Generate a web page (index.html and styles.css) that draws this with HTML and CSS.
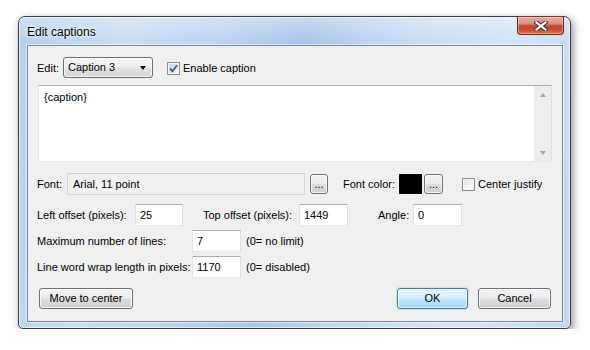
FILE: index.html
```html
<!DOCTYPE html>
<html>
<head>
<meta charset="utf-8">
<link rel="stylesheet" href="styles.css">
</head>
<body>
<div class="window">
  <div class="titlebar">
    <span class="title">Edit captions</span>
    <div class="close">
      <svg width="14" height="10" viewBox="0 0 14 10">
        <path d="M2.5 1.5 L11.5 8.5 M11.5 1.5 L2.5 8.5" stroke="#3a3a3a" stroke-width="4.2" stroke-linecap="square" fill="none"/>
        <path d="M2.5 1.5 L11.5 8.5 M11.5 1.5 L2.5 8.5" stroke="#ffffff" stroke-width="2.2" stroke-linecap="square" fill="none"/>
      </svg>
    </div>
  </div>
  <div class="client">
    <div class="row row-edit">
      <span class="lbl w-edit">Edit:</span>
      <div class="combo"><span>Caption 3</span><span class="arrow"></span></div>
      <span class="check checked"><span class="box"><svg width="11" height="11" viewBox="0 0 11 11"><path d="M2 5.5 L4.5 8.2 L9 2.2" stroke="#3c5b9c" stroke-width="1.9" fill="none"/></svg></span>Enable caption</span>
    </div>
    <div class="memo">
      <div class="memo-text">{caption}</div>
      <div class="vscroll"><span class="up"></span><span class="down"></span></div>
    </div>
    <div class="row row-font">
      <span class="lbl w-font">Font:</span>
      <div class="field ro">Arial, 11 point</div>
      <div class="btn dots dots1">...</div>
      <span class="lbl w-fcolor">Font color:</span>
      <div class="swatch"></div>
      <div class="btn dots dots2">...</div>
      <span class="check cj"><span class="box"></span>Center justify</span>
    </div>
    <div class="row row-off">
      <span class="lbl w-left">Left offset (pixels):</span>
      <div class="field num w48">25</div>
      <span class="lbl w-top">Top offset (pixels):</span>
      <div class="field num w49">1449</div>
      <span class="lbl w-angle">Angle:</span>
      <div class="field num w49">0</div>
    </div>
    <div class="row row-lines">
      <span class="lbl w-long">Maximum number of lines:</span>
      <div class="field num w49">7</div>
      <span class="note">(0= no limit)</span>
    </div>
    <div class="row row-wrap">
      <span class="lbl w-long">Line word wrap length in pixels:</span>
      <div class="field num w49">1170</div>
      <span class="note">(0= disabled)</span>
    </div>
    <div class="row row-buttons">
      <div class="btn move">Move to center</div>
      <div class="spacer"></div>
      <div class="btn ok">OK</div>
      <div class="btn cancel">Cancel</div>
    </div>
  </div>
</div>
</body>
</html>
```

FILE: styles.css
```css
html, body {
  margin: 0;
  background: #ffffff;
}
body {
  font-family: "Liberation Sans", Arial, sans-serif;
  font-size: 11px;
  color: #000;
}
.window {
  margin: 16px 0 0 18px;
  width: 553px;
  height: 313px;
  box-sizing: border-box;
  border: 1px solid #37404c;
  border-radius: 7px 7px 5px 5px;
  padding: 0 7px 6px 8px;
  display: flex;
  flex-direction: column;
  position: relative;
  background:
    linear-gradient(180deg, rgba(255,255,255,0.35) 0px, rgba(255,255,255,0) 24px),
    linear-gradient(100deg, #b4cfee 0%, #c9ddf3 18%, #bad3ef 35%, #a9c7e9 48%, #c3d9f2 62%, #d4e5f7 82%, #c0d7f1 100%);
  box-shadow: inset 0 0 0 1px rgba(255,255,255,0.6), 2px 3px 9px rgba(0,0,0,0.45);
}
.titlebar {
  flex: none;
  height: 28px;
  display: flex;
  align-items: center;
}
.title {
  font-size: 12px;
  line-height: 16px;
  margin-top: 1px;
  text-shadow: 0 0 6px rgba(255,255,255,0.95), 0 0 3px rgba(255,255,255,0.9);
}
.close {
  position: absolute;
  top: -1px;
  right: 6px;
  width: 47px;
  height: 19px;
  box-sizing: border-box;
  border: 1px solid #5b2a22;
  border-top-color: #6d3a33;
  border-radius: 0 0 4px 4px;
  background: linear-gradient(180deg, #e9aa9c 0%, #dc8e7e 40%, #c6442d 52%, #c84b31 75%, #dd7556 100%);
  box-shadow: inset 0 0 0 1px rgba(255,255,255,0.35);
  display: flex;
  align-items: center;
  justify-content: center;
}
.close svg { display: block; margin-top: 1px; }
.client {
  flex: 1;
  background: #f0f0f0;
  border: 1px solid #7b8796;
  display: flex;
  flex-direction: column;
  padding: 11px 11px 0 9px;
  box-shadow: 0 0 0 1px rgba(255,255,255,0.55);
}
.row {
  display: flex;
  align-items: center;
  flex: none;
}
.lbl { white-space: nowrap; flex: none; }
.row-edit { height: 21px; }
.w-edit { width: 26px; }
.combo {
  width: 90px;
  height: 21px;
  box-sizing: border-box;
  border: 1px solid #707070;
  border-radius: 3px;
  background: linear-gradient(180deg, #f6f6f6 0%, #eeeeee 48%, #e2e2e2 52%, #d6d6d6 100%);
  box-shadow: inset 0 0 0 1px rgba(255,255,255,0.7);
  display: flex;
  align-items: center;
  justify-content: space-between;
  padding: 0 5px 1px 4px;
}
.arrow {
  width: 0;
  height: 0;
  border-left: 3.5px solid transparent;
  border-right: 3.5px solid transparent;
  border-top: 4px solid #000;
  margin-right: 1px;
  margin-top: 1px;
}
.check {
  display: flex;
  align-items: center;
  white-space: nowrap;
}
.check .box {
  width: 13px;
  height: 13px;
  box-sizing: border-box;
  border: 1px solid #8e8f8f;
  background: linear-gradient(135deg, #dcdcdc 0%, #f4f4f4 60%, #fcfcfc 100%);
  box-shadow: inset 0 0 0 1px #f4f4f4;
  margin-right: 3px;
  display: flex;
  align-items: center;
  justify-content: center;
}
.check.checked .box {
  background: linear-gradient(135deg, #c8d0dc 0%, #e6eaf0 60%, #f4f6f8 100%);
}
.check .box svg { display: block; }
.row-edit .check { margin-left: 14px; margin-top: 1px; }
.memo {
  flex: none;
  margin: 7px -1px 0 1px;
  height: 77px;
  box-sizing: border-box;
  border: 1px solid #abadb3;
  border-color: #abadb3 #dbdfe6 #e3e9ef #e2e3ea;
  background: #fff;
  display: flex;
}
.memo-text {
  flex: 1;
  padding: 4px 5px;
  line-height: 15px;
}
.vscroll {
  width: 17px;
  background: repeating-conic-gradient(#f5f5f5 0 25%, #e6e6e6 0 50%) 0 0 / 2px 2px;
  display: flex;
  flex-direction: column;
  justify-content: space-between;
  align-items: center;
  padding: 7px 0 6px;
  box-sizing: border-box;
}
.vscroll .up {
  width: 0; height: 0;
  border-left: 3.5px solid transparent;
  border-right: 3.5px solid transparent;
  border-bottom: 4px solid #a3a3a3;
}
.vscroll .down {
  width: 0; height: 0;
  border-left: 3.5px solid transparent;
  border-right: 3.5px solid transparent;
  border-top: 4px solid #a3a3a3;
}
.row-font { height: 22px; margin-top: 11px; }
.w-font { width: 30px; }
.field {
  height: 22px;
  box-sizing: border-box;
  border: 1px solid #abadb3;
  border-color: #abadb3 #dbdfe6 #e3e9ef #e2e3ea;
  background: #fff;
  display: flex;
  align-items: center;
  padding: 0 4px 1px;
  white-space: nowrap;
  flex: none;
}
.field.ro {
  width: 238px;
  background: #f0f0f0;
  border: 1px solid #d6d6d6;
  border-top-color: #cfcfcf;
  padding-left: 5px;
}
.btn {
  box-sizing: border-box;
  border: 1px solid #707070;
  border-radius: 3px;
  background: linear-gradient(180deg, #f2f2f2 0%, #ebebeb 48%, #dddddd 52%, #cfcfcf 100%);
  box-shadow: inset 0 0 0 1px rgba(255,255,255,0.75);
  display: flex;
  align-items: center;
  justify-content: center;
  white-space: nowrap;
  flex: none;
}
.dots {
  height: 20px;
  align-items: flex-end;
  padding-bottom: 3px;
  line-height: 12px;
}
.dots1 { width: 18px; margin-left: 5px; }
.w-fcolor { width: 56px; margin-left: 15px; }
.swatch {
  width: 23px;
  height: 20px;
  background: #000;
  flex: none;
}
.dots2 { width: 19px; margin-left: 2px; }
.cj { margin-left: 19px; }
.row-off { height: 22px; margin-top: 9px; }
.w-left { width: 98px; }
.w48 { width: 48px; }
.w49 { width: 49px; }
.w-top { width: 96px; margin-left: 20px; }
.w-angle { width: 35px; margin-left: 30px; }
.row-lines { height: 22px; margin-top: 4px; }
.row-wrap { height: 22px; margin-top: 4px; }
.w-long { width: 155px; }
.note { margin-left: 5px; white-space: nowrap; }
.row-buttons { height: 21px; margin-top: 10px; }
.row-buttons .btn { height: 21px; padding-bottom: 1px; }
.move { width: 94px; margin-left: 2px; }
.spacer { flex: 1; }
.ok {
  width: 71px;
  border-color: #3c7fb1;
  background: linear-gradient(180deg, #eaf6fd 0%, #d9f0fc 48%, #bee6fd 52%, #a7d9f5 100%);
  box-shadow: inset 0 0 0 1px rgba(255,255,255,0.6), 0 0 2px rgba(60,127,177,0.5);
}
.cancel { width: 73px; margin-left: 10px; }
```
